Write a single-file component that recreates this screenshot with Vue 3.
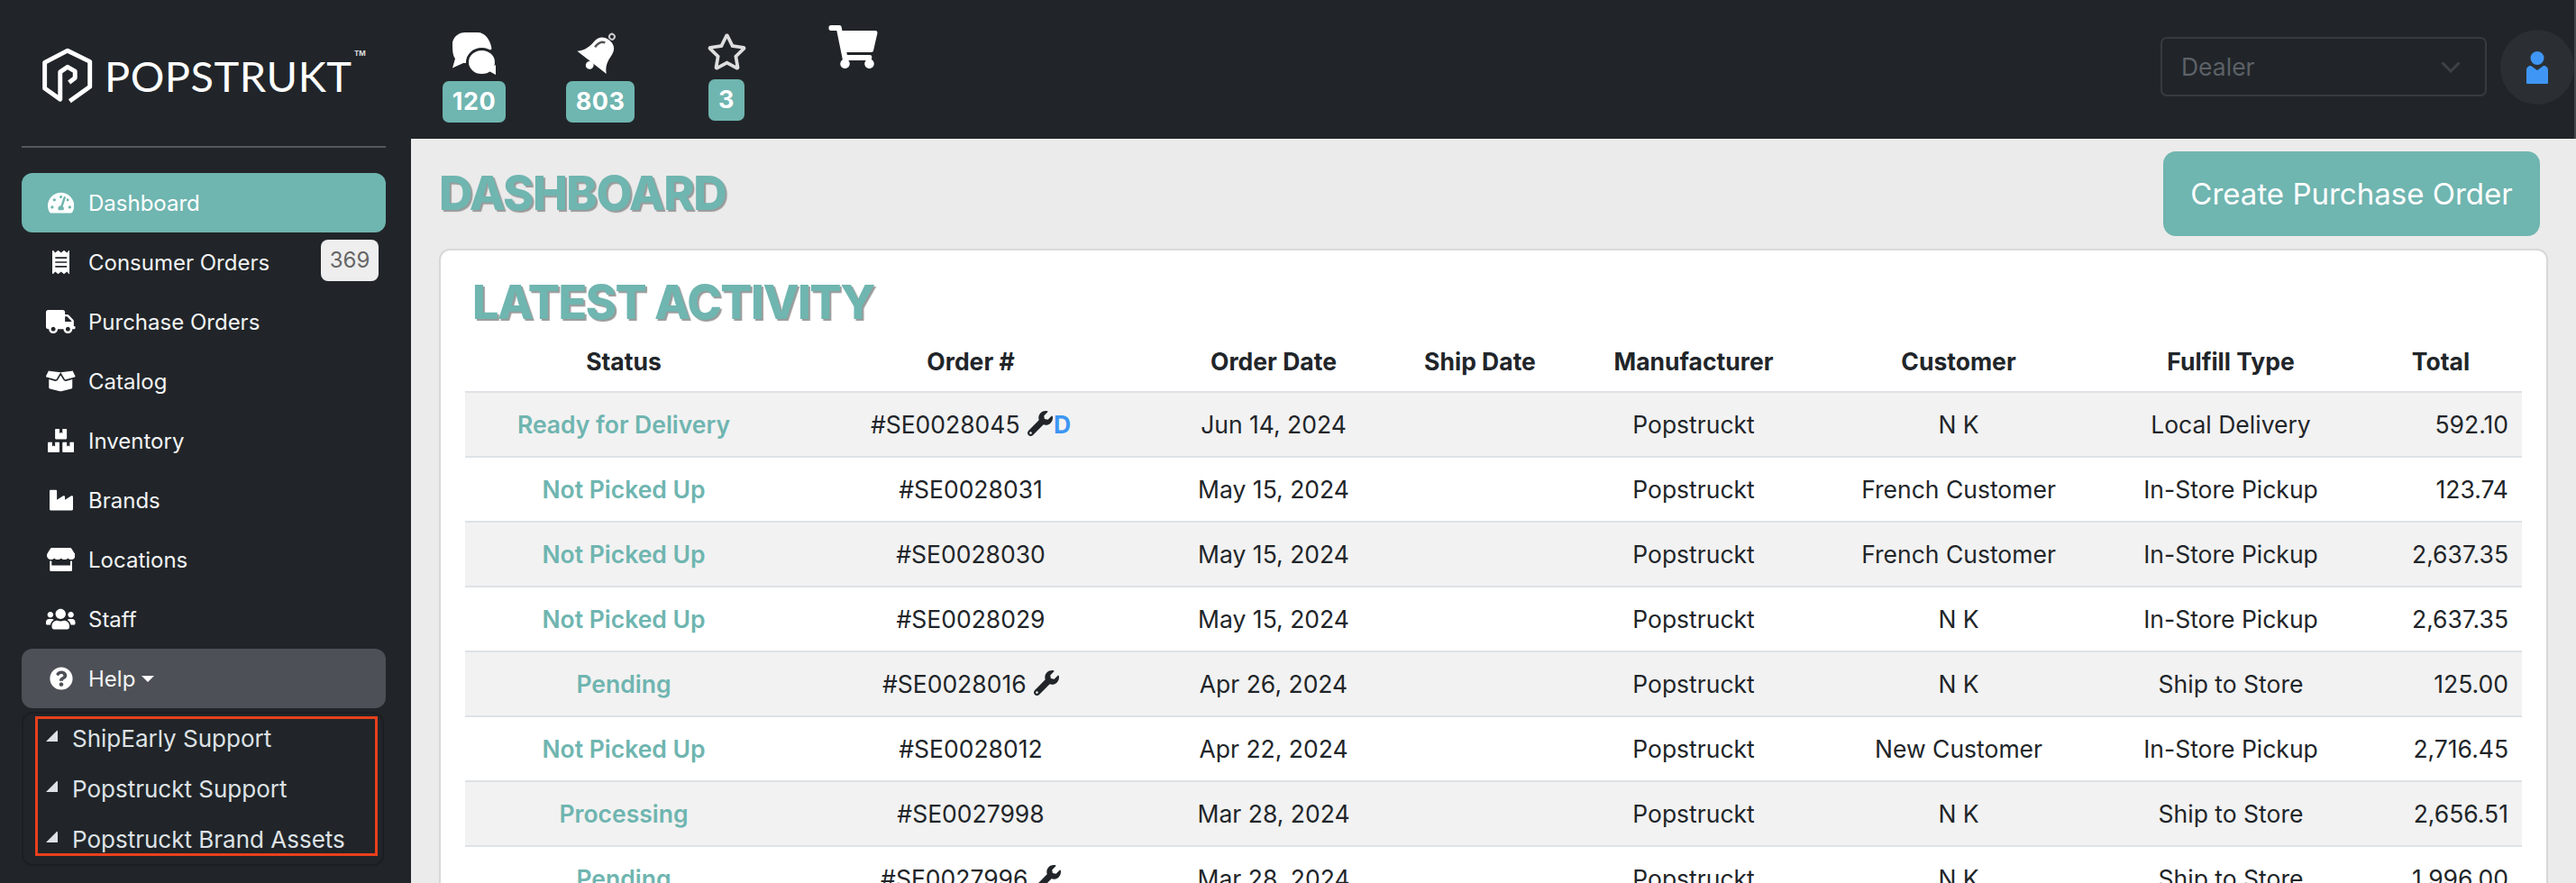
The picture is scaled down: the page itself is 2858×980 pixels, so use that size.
<script setup>
const icons = {
  gauge: ['0 0 576 512', 'M288 32C128.94 32 0 160.94 0 320c0 52.8 14.25 102.26 39.06 144.8 5.61 9.62 16.3 15.2 27.44 15.2h443c11.14 0 21.83-5.58 27.44-15.2C561.75 422.26 576 372.8 576 320c0-159.06-128.94-288-288-288zm0 64c14.71 0 26.58 10.13 30.32 23.65-1.11 2.26-2.64 4.23-3.45 6.67l-9.22 27.67c-5.13 3.49-10.97 6.01-17.64 6.01-17.67 0-32-14.33-32-32S270.33 96 288 96zM96 384c-17.67 0-32-14.33-32-32s14.33-32 32-32 32 14.33 32 32-14.33 32-32 32zm48-160c-17.67 0-32-14.33-32-32s14.33-32 32-32 32 14.33 32 32-14.33 32-32 32zm246.77-72.41l-61.33 184C343.13 347.33 352 364.54 352 384c0 11.72-3.38 22.55-8.88 32H232.88c-5.5-9.45-8.88-20.28-8.88-32 0-33.94 26.5-61.43 59.9-63.59l61.34-184.01c4.17-12.56 17.73-19.45 30.36-15.17 12.57 4.19 19.35 17.77 15.17 30.36zm14.66 57.2l15.52-46.55c3.47-1.29 7.13-2.23 11.05-2.23 17.67 0 32 14.33 32 32s-14.33 32-32 32c-11.38-.01-20.89-6.28-26.57-15.22zM480 384c-17.67 0-32-14.33-32-32s14.33-32 32-32 32 14.33 32 32-14.33 32-32 32z'],
  receipt: ['0 0 384 512', 'M358.4 3.2L320 48 265.6 3.2a15.9 15.9 0 0 0-19.2 0L192 48 137.6 3.2a15.9 15.9 0 0 0-19.2 0L64 48 25.6 3.2C15-4.7 0 2.8 0 16v480c0 13.2 15 20.7 25.6 12.8L64 464l54.4 44.8a15.9 15.9 0 0 0 19.2 0L192 464l54.4 44.8a15.9 15.9 0 0 0 19.2 0L320 464l38.4 44.8c10.5 7.9 25.6.4 25.6-12.8V16c0-13.2-15-20.7-25.6-12.8zM320 360c0 4.4-3.6 8-8 8H72c-4.4 0-8-3.6-8-8v-16c0-4.4 3.6-8 8-8h240c4.4 0 8 3.6 8 8v16zm0-96c0 4.4-3.6 8-8 8H72c-4.4 0-8-3.6-8-8v-16c0-4.4 3.6-8 8-8h240c4.4 0 8 3.6 8 8v16zm0-96c0 4.4-3.6 8-8 8H72c-4.4 0-8-3.6-8-8v-16c0-4.4 3.6-8 8-8h240c4.4 0 8 3.6 8 8v16z'],
  truck: ['0 0 640 512', 'M624 352h-16V243.9c0-12.7-5.1-24.9-14.1-33.9L494 110.1c-9-9-21.2-14.1-33.9-14.1H416V48c0-26.5-21.5-48-48-48H48C21.5 0 0 21.5 0 48v320c0 26.5 21.5 48 48 48h16c0 53 43 96 96 96s96-43 96-96h128c0 53 43 96 96 96s96-43 96-96h48c8.8 0 16-7.2 16-16v-32c0-8.8-7.2-16-16-16zM160 464c-26.5 0-48-21.5-48-48s21.5-48 48-48 48 21.5 48 48-21.5 48-48 48zm320 0c-26.5 0-48-21.5-48-48s21.5-48 48-48 48 21.5 48 48-21.5 48-48 48zm80-208H416V144h44.1l99.9 99.9V256z'],
  box: ['0 0 640 512', 'M425.7 256c-16.9 0-32.8-9-41.4-23.4L320 126l-64.2 106.6c-8.7 14.5-24.6 23.5-41.5 23.5-4.5 0-9-.6-13.3-1.9L64 215v178c0 14.7 10 27.5 24.2 31l216.2 54.1c10.2 2.5 20.9 2.5 31 0L551.8 424c14.2-3.6 24.2-16.4 24.2-31V215l-137 39.1c-4.3 1.3-8.8 1.9-13.3 1.9zm212.6-112.2L586.8 41c-3.1-6.2-9.8-9.8-16.7-8.9L320 64l91.7 152.1c3.8 6.3 11.4 9.3 18.5 7.3l197.9-56.5c9.9-2.9 14.7-13.9 10.2-23.1zM53.2 41L1.7 143.8c-4.6 9.2.3 20.2 10.1 23l197.9 56.5c7.1 2 14.7-1 18.5-7.3L320 64 69.8 32.1c-6.9-.8-13.5 2.7-16.6 8.9z'],
  boxes: ['0 0 576 512', 'M560 288h-80v96l-32-21.3-32 21.3v-96h-80c-8.8 0-16 7.2-16 16v192c0 8.8 7.2 16 16 16h224c8.8 0 16-7.2 16-16V304c0-8.8-7.2-16-16-16zm-384-64h224c8.8 0 16-7.2 16-16V16c0-8.8-7.2-16-16-16h-80v96l-32-21.3L256 96V0h-80c-8.8 0-16 7.2-16 16v192c0 8.8 7.2 16 16 16zm64 64h-80v96l-32-21.3L96 384v-96H16c-8.8 0-16 7.2-16 16v192c0 8.8 7.2 16 16 16h224c8.8 0 16-7.2 16-16V304c0-8.8-7.2-16-16-16z'],
  industry: ['0 0 512 512', 'M475.115 163.781L336 252.309v-68.28c0-18.916-20.931-30.399-36.885-20.248L160 252.309V56c0-13.255-10.745-24-24-24H24C10.745 32 0 42.745 0 56v400c0 13.255 10.745 24 24 24h464c13.255 0 24-10.745 24-24V184.029c0-18.917-20.931-30.399-36.885-20.248z'],
  store: ['0 0 616 512', 'M602 118.6L537.1 15C531.3 5.7 521 0 510 0H106C95 0 84.7 5.7 78.9 15L14 118.6c-33.9 54.1-3.9 129.3 59.4 137.9 4.6.6 9.2.9 13.7.9 29.9 0 56.4-13.1 74.6-33.4 18.2 20.3 44.8 33.4 74.6 33.4 29.9 0 56.4-13.1 74.6-33.4 18.2 20.3 44.8 33.4 74.6 33.4 29.9 0 56.4-13.1 74.6-33.4 18.3 20.3 44.8 33.4 74.6 33.4 4.6 0 9.1-.3 13.7-.9 63.5-8.5 93.6-83.7 59.6-137.9zM530.4 288c-6.4 0-12.7-.7-19-1.8V384H104.6v-97.8c-6.2 1-12.5 1.8-19 1.8-3.9 0-7.9-.2-11.8-.7-3.5-.5-6.9-1.3-10.2-2.3V480c0 17.7 14.3 32 32 32h424c17.7 0 32-14.3 32-32V286c-3.7 1-7.3 1.7-11.1 2.3-4.1.5-8 .7-12.1.7z'],
  users: ['0 0 640 512', 'M96 224c35.3 0 64-28.7 64-64s-28.7-64-64-64-64 28.7-64 64 28.7 64 64 64zm448 0c35.3 0 64-28.7 64-64s-28.7-64-64-64-64 28.7-64 64 28.7 64 64 64zm32 32h-64c-17.6 0-33.5 7.1-45.1 18.6 40.3 22.1 68.9 62 75.1 109.4h66c17.7 0 32-14.3 32-32v-32c0-35.3-28.7-64-64-64zm-256 0c61.9 0 112-50.1 112-112S381.9 32 320 32 208 82.1 208 144s50.1 112 112 112zm76.8 32h-8.3c-20.8 10-43.9 16-68.5 16s-47.6-6-68.5-16h-8.3C179.6 288 128 339.6 128 403.2V432c0 26.5 21.5 48 48 48h288c26.5 0 48-21.5 48-48v-28.8c0-63.6-51.6-115.2-115.2-115.2zm-223.7-13.4C161.5 263.1 145.6 256 128 256H64c-35.3 0-64 28.7-64 64v32c0 17.7 14.3 32 32 32h65.9c6.3-47.4 34.9-87.3 75.2-109.4z'],
  help: ['0 0 512 512', 'M504 256c0 136.997-111.043 248-248 248S8 392.997 8 256C8 119.083 119.043 8 256 8s248 111.083 248 248zM262.655 90c-54.497 0-89.255 22.957-116.549 63.758-3.536 5.286-2.353 12.415 2.715 16.258l34.699 26.31c5.205 3.947 12.621 3.008 16.665-2.122 17.864-22.658 30.113-35.797 57.303-35.797 20.429 0 45.698 13.148 45.698 32.958 0 14.976-12.363 22.667-32.534 33.976C247.128 238.528 216 254.941 216 296v4c0 6.627 5.373 12 12 12h56c6.627 0 12-5.373 12-12v-1.333c0-28.462 83.186-29.647 83.186-106.667 0-58.002-60.165-102-116.531-102zM256 338c-25.365 0-46 20.635-46 46 0 25.364 20.635 46 46 46s46-20.636 46-46c0-25.365-20.635-46-46-46z']
}

const wrench = 'M507.73 109.1c-2.24-9.03-13.54-12.09-20.12-5.51l-74.36 74.36-67.88-11.31-11.31-67.88 74.36-74.36c6.62-6.62 3.43-17.9-5.66-20.16-47.38-11.74-99.55.91-136.58 37.93-39.64 39.64-50.55 97.1-34.05 147.2L18.74 402.76c-24.99 24.99-24.99 65.51 0 90.5 24.99 24.99 65.51 24.99 90.5 0l213.21-213.21c50.12 16.71 107.47 5.68 147.37-34.22 37.07-37.07 49.7-89.32 37.91-136.73zM64 472c-13.25 0-24-10.75-24-24 0-13.26 10.75-24 24-24s24 10.74 24 24c0 13.25-10.75 24-24 24z'

const nav = [
  { label: 'Dashboard', icon: 'gauge', active: true },
  { label: 'Consumer Orders', icon: 'receipt', count: 369 },
  { label: 'Purchase Orders', icon: 'truck' },
  { label: 'Catalog', icon: 'box' },
  { label: 'Inventory', icon: 'boxes' },
  { label: 'Brands', icon: 'industry' },
  { label: 'Locations', icon: 'store' },
  { label: 'Staff', icon: 'users' }
]

const subItems = ['ShipEarly Support', 'Popstruckt Support', 'Popstruckt Brand Assets']

const columns = [
  { label: 'Status', width: 352 },
  { label: 'Order #', width: 418 },
  { label: 'Order Date', width: 254 },
  { label: 'Ship Date', width: 204 },
  { label: 'Manufacturer', width: 270 },
  { label: 'Customer', width: 318 },
  { label: 'Fulfill Type', width: 286 },
  { label: 'Total', width: 180 }
]

const rows = [
  { status: 'Ready for Delivery', order: '#SE0028045', tool: true, dealer: 'D', date: 'Jun 14, 2024', customer: 'N K', fulfill: 'Local Delivery', total: '592.10' },
  { status: 'Not Picked Up', order: '#SE0028031', date: 'May 15, 2024', customer: 'French Customer', fulfill: 'In-Store Pickup', total: '123.74' },
  { status: 'Not Picked Up', order: '#SE0028030', date: 'May 15, 2024', customer: 'French Customer', fulfill: 'In-Store Pickup', total: '2,637.35' },
  { status: 'Not Picked Up', order: '#SE0028029', date: 'May 15, 2024', customer: 'N K', fulfill: 'In-Store Pickup', total: '2,637.35' },
  { status: 'Pending', order: '#SE0028016', tool: true, date: 'Apr 26, 2024', customer: 'N K', fulfill: 'Ship to Store', total: '125.00' },
  { status: 'Not Picked Up', order: '#SE0028012', date: 'Apr 22, 2024', customer: 'New Customer', fulfill: 'In-Store Pickup', total: '2,716.45' },
  { status: 'Processing', order: '#SE0027998', date: 'Mar 28, 2024', customer: 'N K', fulfill: 'Ship to Store', total: '2,656.51' },
  { status: 'Pending', order: '#SE0027996', tool: true, date: 'Mar 28, 2024', customer: 'N K', fulfill: 'Ship to Store', total: '1,996.00' }
]
</script>

<template>
  <div class="app">
    <aside class="sidebar">
      <div class="brand">
        <svg class="brand-mark" viewBox="50 40 170 185" aria-hidden="true">
          <path d="M142 218 L210 170 L210 85 L135 48 L58 88 L58 175 L110 212 L110 120 L135 103 L160 118 L160 140 L140 155" />
        </svg>
        <span class="brand-name">POPSTRUKT</span>
        <span class="brand-tm">TM</span>
      </div>

      <nav class="nav">
        <a v-for="item in nav" :key="item.label" class="nav-item" :class="{ active: item.active }">
          <span class="nav-icon">
            <svg :viewBox="icons[item.icon][0]" aria-hidden="true"><path :d="icons[item.icon][1]" /></svg>
          </span>
          <span>{{ item.label }}</span>
          <span v-if="item.count" class="count">{{ item.count }}</span>
        </a>
        <a class="nav-item open">
          <span class="nav-icon">
            <svg :viewBox="icons.help[0]" aria-hidden="true"><path :d="icons.help[1]" /></svg>
          </span>
          <span>Help</span>
          <span class="caret"></span>
        </a>
        <div class="submenu">
          <ul class="annotated">
            <li v-for="sub in subItems" :key="sub">
              <svg class="tri" viewBox="0 0 13 13" aria-hidden="true"><path d="M0 13 L12 1 Q13 0 13 2 V13 Z" /></svg>
              <span>{{ sub }}</span>
            </li>
          </ul>
        </div>
      </nav>
    </aside>

    <div class="main">
      <header class="topbar">
        <div class="quick">
          <div class="quick-item chat">
            <svg class="qi-chat" viewBox="0 0 48 47" aria-hidden="true">
              <path class="w" d="M0 11 C2 3 8 0 14 0 H28 C36 0 42 8 43.500 18 L30 34 L12 34 L0 39.500 L3 29 C0 25 0 19 0 11Z" />
              <ellipse class="w cut" cx="32.500" cy="33" rx="16" ry="14.500" />
              <path class="w" d="M39 42 L48 47 V36 Z" />
            </svg>
            <span class="badge">120</span>
          </div>
          <div class="quick-item chat">
            <svg class="qi-bell" viewBox="0 0 45 48" aria-hidden="true">
              <g transform="rotate(38 22 25)">
                <path class="w" d="M-1 38 C6 32 7 25 7.500 17 C8 9 14 6 20 6 C26 6 32 9 32.500 17 C33 25 34 32 41 38 Z" />
                <circle class="w" cx="20" cy="42" r="4.500" />
                <circle class="ring" cx="20" cy="1" r="3" />
                <path class="dark" d="M12 22 C12 16 14 12 18 11" />
              </g>
            </svg>
            <span class="badge">803</span>
          </div>
          <div class="quick-item star">
            <svg class="qi-star" viewBox="0 0 576 512" aria-hidden="true">
              <path class="w soft" d="M528.1 171.5L382 150.2 316.7 17.800c-11.700-23.600-45.600-23.900-57.400 0L194 150.2 47.900 171.5c-26.200 3.800-36.700 36.100-17.700 54.600l105.700 103-25 145.500c-4.500 26.300 23.200 46 46.400 33.700L288 439.600l130.700 68.700c23.200 12.200 50.900-7.400 46.400-33.700l-25-145.500 105.700-103c19-18.500 8.500-50.800-17.700-54.600zM388.600 312.300l23.700 138.400L288 385.400l-124.300 65.300 23.700-138.400-100.600-98 139-20.200 62.200-126 62.200 126 139 20.200-100.600 98z" />
            </svg>
            <span class="badge">3</span>
          </div>
          <div class="quick-item cart">
            <svg class="qi-cart" viewBox="0 0 576 512" aria-hidden="true">
              <path class="w" d="M528.12 301.319l47.273-208C578.806 78.301 567.391 64 551.99 64H159.208l-9.166-44.81C147.758 8.021 137.93 0 126.529 0H24C10.745 0 0 10.745 0 24v16c0 13.255 10.745 24 24 24h69.883l70.248 343.435C147.325 417.1 136 435.222 136 456c0 30.928 25.072 56 56 56s56-25.072 56-56c0-15.674-6.447-29.835-16.824-40h209.647C430.447 426.165 424 440.326 424 456c0 30.928 25.072 56 56 56s56-25.072 56-56c0-22.172-12.888-41.332-31.579-50.405l5.517-24.276c3.413-15.018-8.002-29.319-23.403-29.319H218.117l-6.545-32h293.145c11.206 0 20.92-7.754 23.403-18.681z" />
            </svg>
          </div>
        </div>

        <div class="top-right">
          <div class="select">
            <span>Dealer</span>
            <svg class="chev" viewBox="0 0 22 13" aria-hidden="true"><path d="M1.500 1.500 L11 11 L20.500 1.500" /></svg>
          </div>
          <div class="avatar">
            <svg viewBox="0 0 24 36" aria-hidden="true">
              <circle cx="12" cy="7.500" r="7.500" />
              <path d="M5 16 L12 21 L19 16 C22 16 24 18 24 21 V35 Q24 36 23 36 H1 Q0 36 0 35 V21 C0 18 2 16 5 16Z" />
            </svg>
          </div>
        </div>
      </header>

      <div class="content">
        <div class="title-row">
          <h1 class="h-title">DASHBOARD</h1>
          <button class="cta" type="button">Create Purchase Order</button>
        </div>

        <section class="card">
          <h2 class="h-title card-title">LATEST ACTIVITY</h2>
          <table class="table">
            <colgroup>
              <col v-for="c in columns" :key="c.label" :width="c.width" />
            </colgroup>
            <thead>
              <tr><th v-for="c in columns" :key="c.label">{{ c.label }}</th></tr>
            </thead>
            <tbody>
              <tr v-for="r in rows" :key="r.order">
                <td class="status">{{ r.status }}</td>
                <td>
                  {{ r.order }}
                  <svg v-if="r.tool" class="wrench" viewBox="0 0 512 512" aria-hidden="true"><path :d="wrench" /></svg>
                  <span v-if="r.dealer" class="dealer">{{ r.dealer }}</span>
                </td>
                <td>{{ r.date }}</td>
                <td></td>
                <td>Popstruckt</td>
                <td>{{ r.customer }}</td>
                <td>{{ r.fulfill }}</td>
                <td class="total">{{ r.total }}</td>
              </tr>
            </tbody>
          </table>
        </section>
      </div>
    </div>
  </div>
</template>

<style>
html, body { margin: 0; padding: 0; background: #ebebeb; }
</style>

<style scoped>
.app {
  display: flex;
  width: 2858px;
  height: 980px;
  overflow: hidden;
  font-family: Inter, "Noto Sans", sans-serif;
  color: #212529;
  background: #ebebeb;
}

/* sidebar */
.sidebar {
  flex: 0 0 456px;
  box-sizing: border-box;
  background: #212529;
  padding: 0 28px 0 24px;
}
.brand {
  position: relative;
  display: flex;
  align-items: center;
  height: 162px;
  border-bottom: 2px solid #55585c;
  padding-left: 23px;
  box-sizing: content-box;
}
.brand-mark {
  width: 56px;
  height: 62px;
  margin: 6px 13px 0 0;
  fill: none;
  stroke: #fff;
  stroke-width: 15;
  stroke-linejoin: round;
}
.brand-name {
  font-family: Lato, "Open Sans", sans-serif;
  font-size: 47px;
  font-weight: 400;
  line-height: 1;
  letter-spacing: 0.5px;
  color: #fff;
  margin-top: 6px;
}
.brand-tm {
  position: absolute;
  left: 369px;
  top: 54px;
  font-size: 8px;
  font-weight: 700;
  color: #ddd;
}
.nav { margin-top: 28px; }
.nav-item {
  display: flex;
  align-items: center;
  height: 66px;
  padding: 0 8px 0 26px;
  border-radius: 12px;
  font-size: 24px;
  color: #f3f4f5;
}
.nav-item.active { background: #6fb5b0; color: #fff; }
.nav-item.open { background: #4d5056; }
.nav-icon {
  flex: 0 0 35px;
  height: 26px;
  margin-right: 13px;
  display: flex;
  justify-content: center;
}
.nav-icon svg { height: 26px; fill: #fff; display: block; }
.count {
  margin-left: auto;
  margin-bottom: 4px;
  width: 64px;
  height: 46px;
  line-height: 46px;
  text-align: center;
  border-radius: 8px;
  background: #eeeeee;
  color: #666;
}
.caret {
  margin-left: 7px;
  border-left: 7px solid transparent;
  border-right: 7px solid transparent;
  border-top: 7px solid #fff;
}
.submenu {
  margin-top: 4px;
  width: 402px;
  height: 171px;
  box-sizing: border-box;
  border: 2px solid #1b1e22;
  border-radius: 12px;
  padding: 3px 0 0 13px;
}
.annotated {
  list-style: none;
  margin: 0;
  box-sizing: border-box;
  width: 380px;
  height: 155px;
  border: 3px solid #e8401c;
  padding: 5px 0 0 9px;
  display: flex;
  flex-direction: column;
  gap: 22px;
  color: #dee2e6;
  font-size: 26px;
  line-height: 34px;
}
.annotated li { display: flex; align-items: center; white-space: nowrap; }
.tri {
  width: 13px;
  height: 13px;
  margin: -8px 16px 0 0;
  fill: #dee2e6;
  flex: none;
}

/* top bar */
.main { flex: 1; min-width: 0; display: flex; flex-direction: column; }
.topbar {
  flex: 0 0 154px;
  display: flex;
  background: #212529;
  box-shadow: inset -2px 0 0 #45484b;
  padding-right: 2px;
}
.quick { display: grid; grid-auto-flow: column; grid-auto-columns: 140px; align-items: start; }
.quick-item { display: flex; flex-direction: column; align-items: center; }
.quick-item.chat { padding-top: 36px; gap: 7px; }
.quick-item.star { padding-top: 37px; gap: 10px; }
.quick-item.cart { padding-top: 28px; }
.qi-chat { width: 48px; height: 47px; display: block; }
.qi-bell { width: 45px; height: 47px; display: block; overflow: visible; }
.qi-star { width: 45px; height: 41px; display: block; }
.qi-cart { width: 55px; height: 48px; display: block; }
.w { fill: #fff; }
.cut { stroke: #212529; stroke-width: 3; }
.soft { opacity: 0.85; }
.ring { fill: none; stroke: #ccc; stroke-width: 2; }
.dark { fill: none; stroke: #555; stroke-width: 2.500; }
.badge {
  height: 46px;
  line-height: 46px;
  padding: 0 11px;
  border-radius: 7px;
  background: #6fb5b0;
  color: #fff;
  font-size: 27px;
  font-weight: 700;
  letter-spacing: 0.5px;
}
.top-right { margin-left: auto; display: flex; align-items: flex-start; }
.select {
  width: 362px;
  height: 66px;
  margin: 41px 15px 0 0;
  box-sizing: border-box;
  border: 2px solid #373b40;
  border-radius: 7px;
  padding: 0 27px 0 21px;
  display: flex;
  align-items: center;
  justify-content: space-between;
  color: #5c6167;
  font-size: 26.500px;
}
.chev { width: 22px; height: 13px; fill: none; stroke: #3e4247; stroke-width: 3; }
.avatar {
  width: 82px;
  height: 83px;
  margin-top: 33px;
  border-radius: 50%;
  background: #2b2f34;
  display: flex;
  justify-content: center;
  align-items: center;
}
.avatar svg { width: 24px; height: 36px; fill: #3f96f5; margin-top: 1px; }

/* content */
.content { flex: 1; padding: 14px 31px 0; min-height: 0; }
.title-row {
  display: flex;
  justify-content: space-between;
  align-items: center;
  padding-right: 9px;
  margin-bottom: 14px;
}
.h-title {
  margin: 0;
  font-size: 52px;
  line-height: 60px;
  font-weight: 800;
  letter-spacing: -1.500px;
  color: #6fb5b0;
  text-shadow: 2px 2px 1px #9a9a9a;
}
.cta {
  width: 418px;
  height: 94px;
  border: 0;
  border-radius: 14px;
  background: #6fb5b0;
  color: #fff;
  font-family: inherit;
  font-size: 33px;
}
.card {
  box-sizing: border-box;
  height: 800px;
  background: #fff;
  border: 2px solid #d8d8d8;
  border-radius: 12px;
  padding: 28px 27px 0;
}
.card-title { padding-left: 8px; height: 62px; }
.table { border-collapse: separate; border-spacing: 0; table-layout: fixed; width: 2282px; font-size: 26.500px; }
th {
  height: 68px;
  padding: 0;
  font-weight: 700;
  text-align: center;
  border-bottom: 2px solid #dee2e6;
  box-sizing: border-box;
}
td {
  height: 72px;
  padding: 0;
  text-align: center;
  border-bottom: 2px solid #dee2e6;
  box-sizing: border-box;
  white-space: nowrap;
}
tbody tr:nth-child(odd) td { background: #f2f2f2; }
.status { color: #6fb5b0; font-weight: 600; }
.total { text-align: right; padding-right: 15px; }
.wrench { width: 28px; height: 28px; fill: #212529; vertical-align: -3px; margin-left: 1px; }
.dealer { color: #3d96f4; font-weight: 700; margin-left: 1px; }
</style>
